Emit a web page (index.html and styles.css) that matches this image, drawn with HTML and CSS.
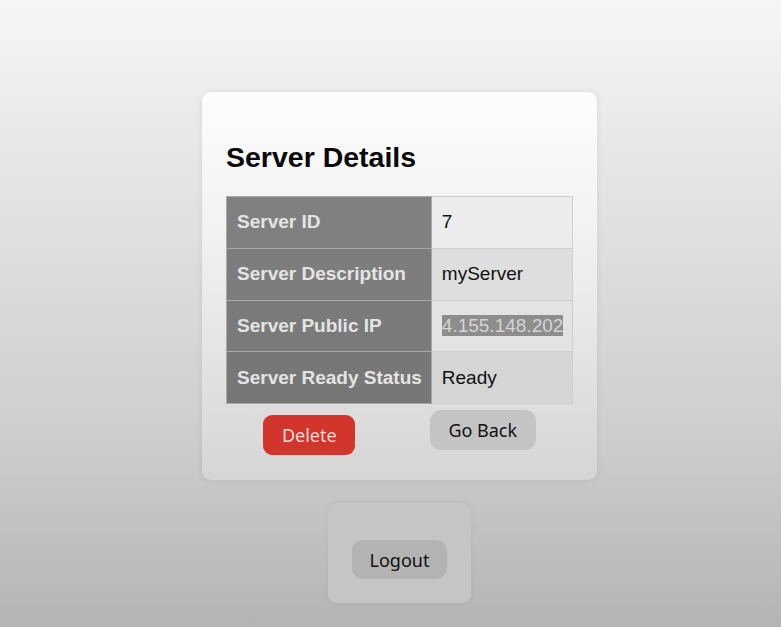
FILE: index.html
```html
<!DOCTYPE html>
<html lang="en">
<head>
<meta charset="utf-8">
<title>Server Details</title>
<link rel="stylesheet" href="styles.css">
</head>
<body>
<main class="page">
  <section class="card">
    <h2 class="title">Server Details</h2>
    <table class="details">
      <tr class="row-1"><th>Server ID</th><td>7</td></tr>
      <tr class="row-2"><th>Server Description</th><td>myServer</td></tr>
      <tr class="row-3"><th>Server Public IP</th><td><span class="selected">4.155.148.202</span></td></tr>
      <tr class="row-4"><th>Server Ready Status</th><td>Ready</td></tr>
    </table>
    <div class="actions">
      <form class="delete-form"><button type="button" class="btn btn-danger">Delete</button></form>
      <button type="button" class="btn btn-gray">Go Back</button>
    </div>
  </section>
  <section class="card card-small">
    <button type="button" class="btn btn-logout">Logout</button>
  </section>
</main>
</body>
</html>
```

FILE: styles.css
```css
html, body {
  margin: 0;
  padding: 0;
  height: 100%;
}
body {
  background: linear-gradient(to bottom, #f6f6f6 0%, #e9e9e9 20%, #cdcdcd 70%, #b4b4b4 100%);
  font-family: "Liberation Sans", Arial, sans-serif;
  min-height: 627px;
  overflow: hidden;
}
.page {
  display: flex;
  flex-direction: column;
  align-items: center;
  padding-top: 92px;
  padding-left: 18px;
  gap: 23px;
}
.card {
  width: 347px;
  padding: 24px 24px 25px;
  border-radius: 9px;
  background: linear-gradient(to bottom, #fdfdfd 0%, #f0f0f0 40%, #d5d5d5 100%);
  box-shadow: 0 0 6px rgba(0, 0, 0, 0.08);
}
.title {
  margin: 25px 0 23px;
  font-size: 28.5px;
  line-height: 32px;
  font-weight: bold;
  color: #0a0a0a;
}
.details {
  border-collapse: collapse;
  font-size: 19px;
}
.details th, .details td {
  height: 51.75px;
  padding: 0 9px 0 10px;
  border: 1px solid #cfcfcf;
  text-align: left;
  white-space: nowrap;
  box-sizing: border-box;
}
.details th {
  background: #7c7c7c;
  color: #e4e4e4;
  font-weight: bold;
  border-color: #a9a9a9;
}
.details td {
  color: #111;
  font-weight: normal;
}
.row-1 td { background: #ececec; }
.row-2 td { background: #dedede; }
.row-3 td { background: #e3e3e3; }
.row-4 td { background: #d5d5d5; }
.row-1 th { background: #808080; }
.row-2 th { background: #7d7d7d; }
.row-3 th { background: #7a7a7a; }
.row-4 th { background: #777777; }
.selected {
  background: #8d8d8d;
  color: #d4d4d4;
}
.actions {
  display: flex;
  justify-content: space-around;
  align-items: flex-start;
  margin-top: 6px;
}
.delete-form {
  margin: 5px 0 0;
}
.btn {
  font-family: "Noto Sans", "Open Sans", sans-serif;
  font-size: 18px;
  border: none;
  height: 40px;
  cursor: pointer;
}
.btn-danger {
  width: 92px;
  background: #d1352c;
  color: #f2dcd8;
  border-radius: 9px;
}
.btn-gray {
  width: 106px;
  background: #c4c4c4;
  color: #111;
  border-radius: 11px;
}
.card-small {
  width: 95px;
  padding: 37px 24px 24px;
  background: #c5c5c5;
  box-shadow: 0 0 5px rgba(0, 0, 0, 0.05);
}
.btn-logout {
  width: 95px;
  height: 39px;
  background: #b3b3b3;
  color: #111;
  border-radius: 11px;
  display: block;
}
```
